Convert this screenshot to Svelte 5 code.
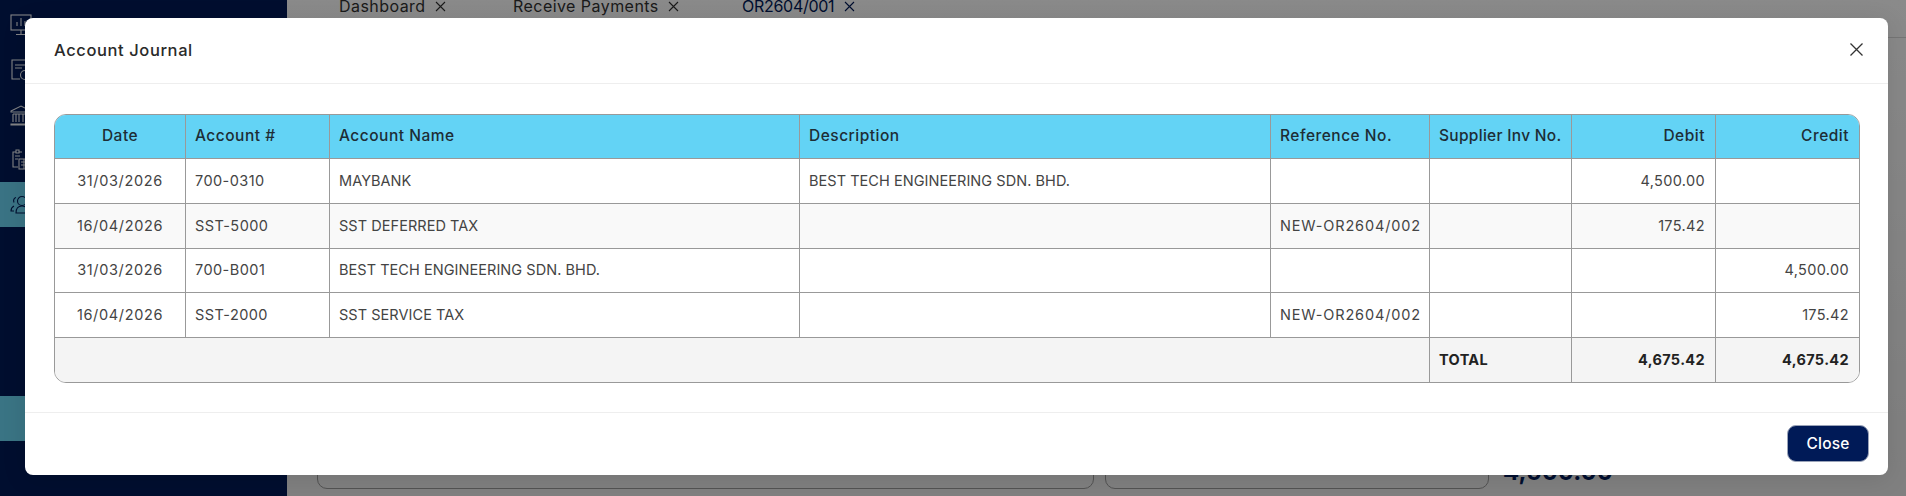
<script>
  const columns = [
    { label: 'Date', cls: 'center date', w: 131 },
    { label: 'Account #', cls: 'acct', w: 144 },
    { label: 'Account Name', cls: 'name', w: 470 },
    { label: 'Description', cls: 'name', w: 471 },
    { label: 'Reference No.', cls: 'refno', w: 159 },
    { label: 'Supplier Inv No.', cls: 'supp', w: 142 },
    { label: 'Debit', cls: 'right num', w: 144 },
    { label: 'Credit', cls: 'right num', w: 143 }
  ];
  const rows = [
    ['31/03/2026', '700-0310', 'MAYBANK', 'BEST TECH ENGINEERING SDN. BHD.', '', '', '4,500.00', ''],
    ['16/04/2026', 'SST-5000', 'SST DEFERRED TAX', '', 'NEW-OR2604/002', '', '175.42', ''],
    ['31/03/2026', '700-B001', 'BEST TECH ENGINEERING SDN. BHD.', '', '', '', '', '4,500.00'],
    ['16/04/2026', 'SST-2000', 'SST SERVICE TAX', '', 'NEW-OR2604/002', '', '', '175.42']
  ];
  const tabs = [
    { label: 'Dashboard', w: 174 },
    { label: 'Receive Payments', w: 229 },
    { label: 'OR2604/001', w: 130, active: true }
  ];
</script>

<div class="page">
  <aside class="sidebar">
    <div class="nav-item">
      <svg width="22" height="22" viewBox="0 0 22 22" fill="none" stroke="currentColor" stroke-width="1.1"><rect x="1" y="1" width="20" height="15" /><path d="M7 12V8M11 12V4M15 12V7M11 16v4M6 20.500h10" /></svg>
    </div>
    <div class="nav-item">
      <svg width="22" height="22" viewBox="0 0 22 22" fill="none" stroke="currentColor" stroke-width="1.1"><path d="M10 20H2V1h17v11M5 6h11M5 9h7" /><circle cx="15" cy="16" r="4.500" /></svg>
    </div>
    <div class="nav-item">
      <svg width="22" height="22" viewBox="0 0 22 22" fill="none" stroke="currentColor" stroke-width="1.1"><path d="M1 7l10-5 10 5v1H1zM3 10h16M3 10v8M6 10v8M9 10v8M13 10v8M16 10v8M19 10v8M1 20h20v1H1z" /></svg>
    </div>
    <div class="nav-item">
      <svg width="22" height="22" viewBox="0 0 22 22" fill="none" stroke="currentColor" stroke-width="1.1"><path d="M6 3H3v15h5M12 3H9M6 1h3v3H6zM5 7h5M5 10h3" /><rect x="9" y="10" width="11" height="10" /><path d="M11 13h7M11 16h7M14 10v10" /></svg>
    </div>
    <div class="nav-item active">
      <svg width="22" height="22" viewBox="0 0 22 22" fill="none" stroke="currentColor" stroke-width="1.1"><circle cx="12" cy="7" r="4.500" /><path d="M6 19c0-5 3-7 6-7s6 2 6 7zM6 3.500C4 4 3 6 4 8.500M4 12c-2 1-3 3-3 5h3" /></svg>
    </div>
    <div class="nav-item active second"></div>
  </aside>

  <main class="content">
    <nav class="tabs">
      {#each tabs as tab}
        <div class="tab" class:current={tab.active} style="width:{tab.w}px">
          <span>{tab.label}</span>
          <svg width="11" height="11" viewBox="0 0 11 11" stroke="currentColor" stroke-width="1.1"><path d="M1 1l9 9M10 1l-9 9" /></svg>
        </div>
      {/each}
    </nav>
    <div class="fields">
      <div class="box wide"></div>
      <div class="box narrow"></div>
      <div class="amount">4,500.00</div>
    </div>
  </main>

  <div class="backdrop"></div>

  <section class="modal">
    <header class="modal-header">
      <h2>Account Journal</h2>
      <svg class="x" width="15" height="15" viewBox="0 0 15 15" stroke="#333" stroke-width="1.3" fill="none"><path d="M1.500 1.500l12 12M13.500 1.500l-12 12" /></svg>
    </header>
    <div class="modal-body">
      <div class="table-wrap">
        <table>
          <colgroup>
            {#each columns as c}
              <col style="width:{c.w}px" />
            {/each}
          </colgroup>
          <thead>
            <tr>
              {#each columns as c}
                <th class={c.cls}><span>{c.label}</span></th>
              {/each}
            </tr>
          </thead>
          <tbody>
            {#each rows as row}
              <tr>
                {#each row as cell, i}
                  <td class={columns[i].cls}><span>{cell}</span></td>
                {/each}
              </tr>
            {/each}
          </tbody>
          <tfoot>
            <tr>
              <td colspan="5"></td>
              <td class="total"><span>TOTAL</span></td>
              <td class="total right"><span>4,675.42</span></td>
              <td class="total right"><span>4,675.42</span></td>
            </tr>
          </tfoot>
        </table>
      </div>
    </div>
    <footer class="modal-footer">
      <button type="button">Close</button>
    </footer>
  </section>
</div>

<style>
  :global(body) {
    margin: 0;
    font-family: Inter, "Liberation Sans", sans-serif;
    overflow: hidden;
  }
  .page {
    position: relative;
    display: flex;
    width: 1906px;
    height: 496px;
    overflow: hidden;
  }
  .sidebar {
    width: 287px;
    flex: none;
    padding-top: 2px;
    box-sizing: border-box;
    background: #001a57;
    color: #fff;
  }
  .nav-item {
    height: 45px;
    padding-left: 10px;
    display: flex;
    align-items: center;
    opacity: 0.95;
  }
  .nav-item.active {
    background: #72e0fd;
    color: #001a57;
  }
  .nav-item.second {
    margin-top: 169px;
  }
  .content {
    flex: 1;
    display: flex;
    flex-direction: column;
    justify-content: space-between;
    background: linear-gradient(#ffffff, #ececec);
    padding-bottom: 7px;
  }
  .tabs {
    display: flex;
    height: 38px;
    box-sizing: border-box;
    padding-left: 52px;
    border-bottom: 1px solid #d8d8d8;
  }
  .tab {
    display: flex;
    align-items: center;
    gap: 9.500px;
    height: 12px;
    font-size: 16px;
    letter-spacing: 0.45px;
    color: #333;
  }
  .tab.current {
    color: #001a57;
    letter-spacing: -0.28px;
  }
  .fields {
    display: flex;
    align-items: flex-end;
    padding-left: 30px;
    gap: 11px;
  }
  .box {
    height: 60px;
    box-sizing: border-box;
    border: 1px solid #999;
    border-radius: 10px;
  }
  .box.wide { width: 777px; }
  .box.narrow { width: 384px; }
  .amount {
    align-self: flex-end;
    margin-left: 3px;
    margin-bottom: 3px;
    font-size: 24px;
    font-weight: 700;
    line-height: 28px;
    color: #001a57;
  }
  .backdrop {
    position: absolute;
    inset: 0;
    background: rgba(0, 0, 0, 0.46);
  }
  .modal {
    position: absolute;
    left: 25px;
    top: 18px;
    width: 1863px;
    height: 457px;
    display: flex;
    flex-direction: column;
    background: #fff;
    border-radius: 8px;
    box-shadow: 0 4px 24px rgba(0, 0, 0, 0.1);
  }
  .modal-header {
    height: 66px;
    flex: none;
    box-sizing: border-box;
    display: flex;
    align-items: center;
    justify-content: space-between;
    padding: 0 24px 2px 29px;
    border-bottom: 1px solid #eee;
  }
  h2 {
    margin: 0;
    font-size: 16.500px;
    font-weight: 500;
    letter-spacing: 0.6px;
    color: #2a2a2a;
  }
  .modal-body {
    flex: 1;
    padding: 30px 28px 0 29px;
  }
  .table-wrap {
    border: 1px solid #999;
    border-radius: 12px;
    overflow: hidden;
  }
  table {
    width: 100%;
    table-layout: fixed;
    border-collapse: separate;
    border-spacing: 0;
    font-size: 14.500px;
    color: #444;
  }
  th, td {
    padding: 0 10px 0 9px;
    border-right: 1px solid #999;
    border-bottom: 1px solid #999;
    text-align: left;
    white-space: nowrap;
    box-sizing: border-box;
    letter-spacing: 0.2px;
  }
  th.center, td.center { padding: 0 10px; }
  th span, td span {
    position: relative;
    top: -1px;
  }
  th:last-child, td:last-child { border-right: 0; }
  tfoot td { border-bottom: 0; }
  td.date { letter-spacing: 0.65px; }
  td.acct { letter-spacing: 0.45px; }
  td.name { letter-spacing: 0.05px; }
  td.refno { letter-spacing: 0.85px; }
  td.num { letter-spacing: 0.35px; }
  th {
    height: 44px;
    background: #63d3f5;
    color: #1d2d35;
    font-size: 15.500px;
    font-weight: 500;
    letter-spacing: 0.5px;
  }
  th.supp { letter-spacing: 0.3px; }
  tbody td { height: 45px; }
  tbody tr:nth-child(3) td { height: 44px; }
  tbody tr:nth-child(even) td { background: #f9f9f9; }
  tbody tr:nth-child(4) td { background: #fff; }
  tfoot td {
    height: 44px;
    background: #f4f4f4;
  }
  .center { text-align: center; }
  .right { text-align: right; }
  td.total {
    font-weight: 700;
    color: #222;
    letter-spacing: 0.35px;
  }
  .modal-footer {
    height: 63px;
    flex: none;
    box-sizing: border-box;
    border-top: 1px solid #eee;
    display: flex;
    align-items: flex-start;
    justify-content: flex-end;
    padding: 12px 19px 0 0;
  }
  button {
    width: 82px;
    height: 37px;
    background: #001a57;
    border: 1px solid #9aa3b8;
    border-radius: 9px;
    color: #fff;
    font: 500 15.500px Inter, "Liberation Sans", sans-serif;
    letter-spacing: 0.2px;
  }
</style>
